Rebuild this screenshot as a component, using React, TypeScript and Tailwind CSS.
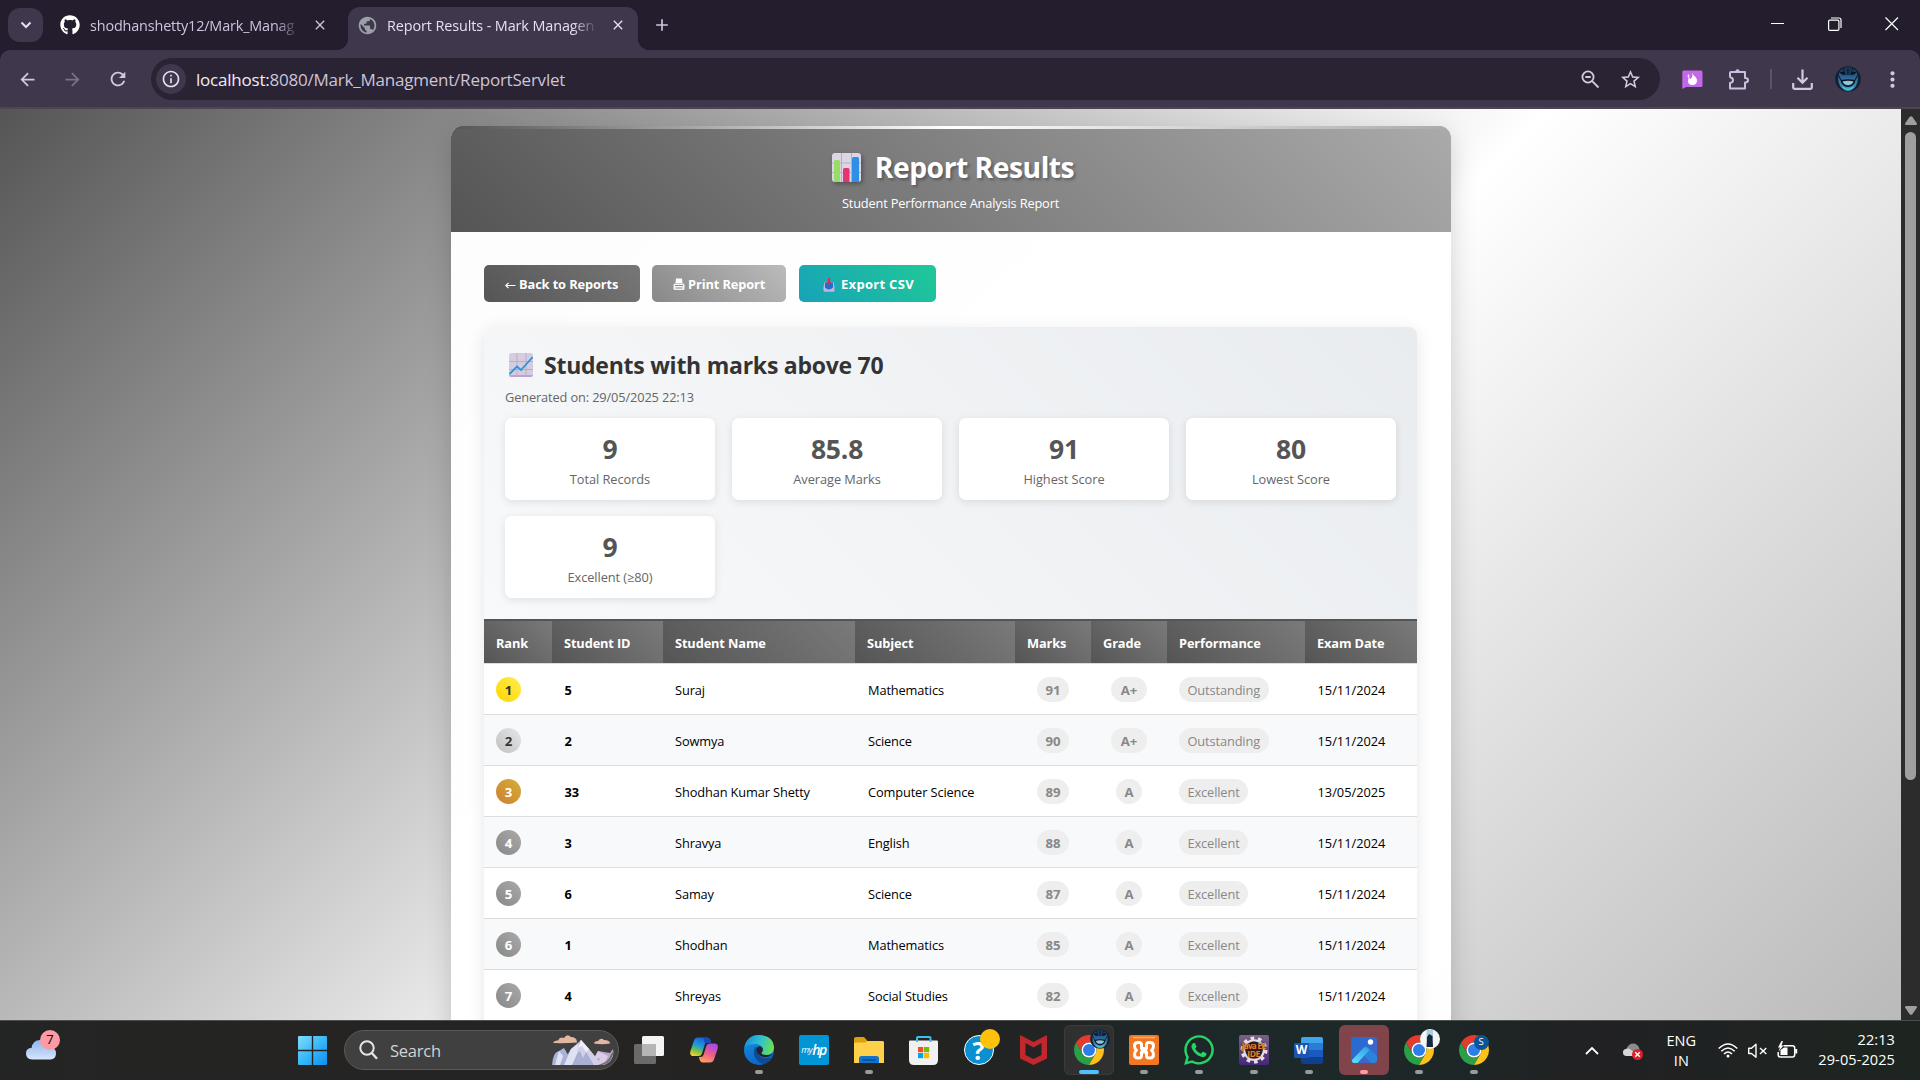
import type { ReactNode } from "react";
import { FaGithub, FaWhatsapp } from "react-icons/fa";
import {
  MdAdd,
  MdArrowBack,
  MdArrowForward,
  MdClose,
  MdInfoOutline,
  MdMoreVert,
  MdPublic,
  MdRefresh,
  MdStarBorder,
} from "react-icons/md";

/* ---------- shared drawings ---------- */

function Avatar({ size }: { size: number }) {
  return (
    <svg width={size} height={size} viewBox="0 0 26 26">
      <defs>
        <linearGradient id="face" x1="0" y1="0" x2="0" y2="1">
          <stop offset="0" stopColor="#15315a" />
          <stop offset="0.5" stopColor="#2f6c9c" />
          <stop offset="1" stopColor="#3fa6c4" />
        </linearGradient>
      </defs>
      <circle cx="13" cy="13" r="12.8" fill="#14202f" />
      <path d="M5 5Q13-3 21 5Q25 12 21 20Q13 30 5 20Q1 12 5 5" fill="url(#face)" />
      <path d="M8 2L10 7M18 2L16 7M3 9L6 14M23 9L20 14M12.2 3V9M14 3V9" stroke="#0e1a2b" strokeWidth="1.1" />
      <path d="M4.5 6Q9 4 11 8.5Q7 10 4.5 6M21.500 6Q17 4 15 8.500Q19 10 21.500 6" fill="#0a121e" />
      <path d="M5.500 14Q13 12.500 20.500 14Q19.500 20.500 13 21Q6.500 20.500 5.500 14" fill="#0c1724" />
      <path d="M7.500 15.500Q13 13.800 18.500 15.500Q17 19.300 13 19.300Q9 19.300 7.500 15.500" fill="#8cc6dc" />
      <path d="M7.500 21Q13 25 18.500 21" stroke="#5cc0dc" strokeWidth="1.200" fill="none" />
    </svg>
  );
}

function Chrome() {
  return (
    <svg width="30" height="30" viewBox="2 2 44 44">
      <path d="M4.95 13A22 22 0 0 1 43.05 13H24A11 11 0 0 0 14.47 29.500Z" fill="#e33b2e" />
      <path d="M4.950 13L14.470 29.500A11 11 0 0 0 33.530 29.500L24 46A22 22 0 0 1 4.950 13" fill="#2a9f48" />
      <path d="M24 46L33.530 29.500A11 11 0 0 0 24 13H43.050A22 22 0 0 1 24 46" fill="#fcc21b" />
      <circle cx="24" cy="24" r="11" fill="#fff" />
      <circle cx="24" cy="24" r="8.800" fill="#2f7de9" />
    </svg>
  );
}

/* ---------- browser chrome ---------- */

function TabStrip() {
  return (
    <div className="flex h-[50px] items-start bg-[#231d2e] text-[14.4px] text-[#cfc3dd]">
      <div className="mt-2 ml-2 flex h-[34px] w-[35px] items-center justify-center rounded-[12px] bg-[#3f374b]">
        <svg width="12" height="8" viewBox="0 0 12 8" fill="none" stroke="#e6dff0" strokeWidth="2">
          <path d="M1.500 1.500L6 6L10.500 1.500" />
        </svg>
      </div>
      <div className="flex h-[50px] w-[305px] items-center pl-[17px]">
        <FaGithub size={20} color="#fff" />
        <span className="ml-[10px] w-[210px] overflow-hidden pt-px tracking-[-0.15px] whitespace-nowrap [mask-image:linear-gradient(90deg,#000_88%,transparent)]">
          shodhanshetty12/Mark_Manag
        </span>
        <MdClose size={16} className="ml-[12px]" />
      </div>
      <div className="relative mt-[7px] flex h-[43px] w-[290px] items-center rounded-t-[12px] bg-[#3f374b] pl-[9px] text-[#e6dff0]">
        <div className="absolute bottom-0 -left-3 size-3 bg-[radial-gradient(circle_at_0_0,transparent_12px,#3f374b_12.5px)]" />
        <div className="absolute -right-3 bottom-0 size-3 bg-[radial-gradient(circle_at_100%_0,transparent_12px,#3f374b_12.5px)]" />
        <MdPublic size={21} color="#9aa0a6" className="mb-[7px]" />
        <span className="mb-[6px] ml-[9px] w-[211px] overflow-hidden tracking-[-0.1px] whitespace-nowrap [mask-image:linear-gradient(90deg,#000_88%,transparent)]">
          Report Results - Mark Managen
        </span>
        <MdClose size={16} className="mb-[7px] ml-[12px]" />
      </div>
      <MdAdd size={20} className="mt-[15px] ml-[14px]" />
      <div className="mt-[17px] mr-[21px] ml-auto flex gap-[43px]">
        <svg width="14" height="14" viewBox="0 0 14 14" stroke="#fff">
          <path d="M0 6.500H13" />
        </svg>
        <svg width="14" height="14" viewBox="0 0 14 14" fill="none" stroke="#fff" strokeWidth="1.200">
          <rect x="0.600" y="3.100" width="10.300" height="10.300" rx="1.200" />
          <path d="M3 1H11Q13 1 13 3V11" />
        </svg>
        <svg width="14" height="14" viewBox="0 0 14 14" stroke="#fff" strokeWidth="1.200">
          <path d="M0.500 0.500L13 13M13 0.500L0.500 13" />
        </svg>
      </div>
    </div>
  );
}

function Toolbar() {
  return (
    <div className="bg-[#231d2e]">
      <div className="flex h-[59px] items-start rounded-t-[10px] border-b-2 border-[#4d454f] bg-[#3f374b] pt-2 text-[#d3c8e2]">
        <div className="flex h-[42px] w-[151px] items-center">
          <MdArrowBack size={21} className="ml-[17px]" />
          <MdArrowForward size={21} className="ml-6 text-[#7b7189]" />
          <MdRefresh size={22} className="ml-6" />
        </div>
        <div className="flex h-[42px] w-[1509px] items-center rounded-full bg-[#2a2334]">
          <div className="ml-[5px] flex size-[30px] items-center justify-center rounded-full bg-[#3f374b]">
            <MdInfoOutline size={20} color="#e6dff0" />
          </div>
          <span className="ml-[10px] pt-0.5 text-[17px] tracking-[-0.22px] text-[#cdc4d6]">
            <span className="text-[#f1ecf6]">localhost:</span>8080/Mark_Managment/ReportServlet
          </span>
          <svg className="ml-auto" width="19" height="19" viewBox="0 0 19 19" fill="none" stroke="#d3ccd9" strokeWidth="1.800">
            <circle cx="7" cy="7" r="5.600" />
            <path d="M11.200 11.200L17.500 17.500M4.300 7H9.700" />
          </svg>
          <MdStarBorder size={23} color="#d3ccd9" className="mr-[18px] ml-[19px]" />
        </div>
        <div className="flex h-[42px] items-center">
          <svg className="ml-[22px]" width="21" height="19" viewBox="0 0 21 19">
            <path d="M1.500 0.500H19Q20.500 0.500 20.500 2V15.500Q20.500 17 19 17H4L0.300 19V2Q0.300 0.500 1.500 0.500" fill="#c468ea" />
            <path d="M10.500 2.500Q10.500 5 13.500 7Q15.500 9 15 11.500Q14 15 10.500 15Q6.500 15 6 11.500Q5.500 9 7.500 7.500Q8 9 9 9Q11 6.500 10.500 2.500" fill="#fff" />
            <path d="M6.500 4Q8 6 7 8Q4.500 7 6.500 4" fill="#fff" />
          </svg>
          <svg className="ml-[25px]" width="21" height="21" viewBox="0 0 21 21" fill="none" stroke="#cdbfe0" strokeWidth="2">
            <path d="M3 3H17V9Q20 9 20 11.200T17 13.500V19.500H2V14Q5 13.500 5 11.200T2 8V4Q2 3 3 3Z" strokeLinejoin="round" />
            <path d="M7.200 2.500Q7.500 0.200 9.500 0.200T11.800 2.500" fill="#cdbfe0" stroke="none" />
          </svg>
          <div className="ml-[21px] h-5 w-[2px] bg-[#5d5369]" />
          <svg className="ml-5" width="21" height="21" viewBox="0 0 21 21" fill="none" stroke="#d3c8e2" strokeWidth="2.200">
            <path d="M10.500 0.500V13.500M5.500 8.700L10.500 13.700L15.500 8.700M1.200 14V18.500Q1.200 19.800 2.500 19.800H18.500Q19.800 19.800 19.800 18.500V14" />
          </svg>
          <div className="ml-[22px]">
            <Avatar size={26} />
          </div>
          <MdMoreVert size={25} className="ml-[19px]" />
        </div>
      </div>
    </div>
  );
}

/* ---------- report page ---------- */

function BarChartEmoji() {
  return (
    <svg width="29" height="29" viewBox="0 0 29 29" className="drop-shadow-[2px_2px_2px_rgba(0,0,0,0.3)]">
      <rect width="29" height="29" rx="3" fill="#dcd5e4" />
      <path d="M9.500 0V29M19.500 0V29M0 10H29M0 19.500H29" stroke="#b7adc4" />
      <path d="M2 8.500Q2 7 3.500 7H6.500Q8 7 8 8.500V29H2Z" fill="#96de66" />
      <path d="M11 16.500Q11 15 12.500 15H16Q17.500 15 17.500 16.500V29H11Z" fill="#e3356f" />
      <path d="M20 5.500Q20 4 21.500 4H25.500Q27 4 27 5.500V29H20Z" fill="#2f8fe6" />
    </svg>
  );
}

function LineChartEmoji() {
  return (
    <svg width="24" height="24" viewBox="0 0 24 24">
      <rect width="24" height="24" rx="2.500" fill="#d5cce0" />
      <path d="M0 22Q0 24 2.500 24H21.500Q24 24 24 22Z" fill="#bda0d4" />
      <path d="M8 0V24M17 0V24M0 8.500H24M0 16.500H24" stroke="#b9aec8" />
      <path d="M0.500 21L8 13.500L12 17L23.700 4" stroke="#2f93d8" strokeWidth="1.800" fill="none" />
    </svg>
  );
}

function PrinterIcon() {
  return (
    <svg width="12" height="13" viewBox="0 0 12 13">
      <path d="M3 0.500H9L9.500 5H2.500Z" fill="#fff" />
      <rect x="0.500" y="5.500" width="11" height="6.500" rx="1.500" fill="#f3f3f3" />
      <path d="M2 7.500H10M2.500 10H9.500" stroke="#8e8e8e" />
    </svg>
  );
}

function InboxIcon() {
  return (
    <svg width="12" height="14" viewBox="0 0 12 14">
      <path d="M1.500 4H10.500L11.500 9V12.500Q11.500 13.800 10.200 13.800H1.800Q0.500 13.800 0.500 12.500V9Z" fill="#c3b4d8" />
      <path d="M2 4.500H10V9.500Q8 11.500 6 11.500T2 9.500Z" fill="#1c6fd0" />
      <path d="M5 0H7V4H8.500L6 7L3.500 4H5Z" fill="#d3305a" />
    </svg>
  );
}

const stats: [string, string][] = [
  ["9", "Total Records"],
  ["85.8", "Average Marks"],
  ["91", "Highest Score"],
  ["80", "Lowest Score"],
  ["9", "Excellent (≥80)"],
];

const columns = ["Rank", "Student ID", "Student Name", "Subject", "Marks", "Grade", "Performance", "Exam Date"];

const rows = [
  { id: "5", name: "Suraj", subject: "Mathematics", marks: 91, grade: "A+", perf: "Outstanding", date: "15/11/2024" },
  { id: "2", name: "Sowmya", subject: "Science", marks: 90, grade: "A+", perf: "Outstanding", date: "15/11/2024" },
  { id: "33", name: "Shodhan Kumar Shetty", subject: "Computer Science", marks: 89, grade: "A", perf: "Excellent", date: "13/05/2025" },
  { id: "3", name: "Shravya", subject: "English", marks: 88, grade: "A", perf: "Excellent", date: "15/11/2024" },
  { id: "6", name: "Samay", subject: "Science", marks: 87, grade: "A", perf: "Excellent", date: "15/11/2024" },
  { id: "1", name: "Shodhan", subject: "Mathematics", marks: 85, grade: "A", perf: "Excellent", date: "15/11/2024" },
  { id: "4", name: "Shreyas", subject: "Social Studies", marks: 82, grade: "A", perf: "Excellent", date: "15/11/2024" },
];

const rankStyles = [
  "bg-[linear-gradient(45deg,#ffd700,#ffed4e)] text-[#333]",
  "bg-[linear-gradient(45deg,#c0c0c0,#e8e8e8)] text-[#333]",
  "bg-[linear-gradient(45deg,#cd7f32,#d4af37)] text-white",
];

const gridCols = "grid grid-cols-[68px_111px_192px_160px_76px_76px_138px_112px]";

function Pill({ children, bold, wide }: { children: ReactNode; bold?: boolean; wide?: boolean }) {
  return (
    <span
      className={`flex h-[25px] items-center justify-center rounded-full bg-[#eee] px-[8.5px] pt-[3px] text-[#888] ${bold ? "text-[13.2px] font-bold" : "tracking-[-0.12px]"} ${wide ? "w-9" : ""}`}
    >
      {children}
    </span>
  );
}

function ReportTable() {
  return (
    <div className="text-[12.8px] tracking-[-0.12px] text-black">
      <div className={`${gridCols} h-[45px] border-t-2 border-b border-t-[#555] border-b-[#ddd] font-bold text-white`}>
        {columns.map((c) => (
          <div key={c} className="flex items-center bg-[linear-gradient(45deg,#555,#7a7a7a)] pt-[3px] pl-[12px]">
            {c}
          </div>
        ))}
      </div>
      {rows.map((r, i) => (
        <div
          key={r.id}
          className={`${gridCols} h-[51px] items-center border-b border-[#ddd] ${i % 2 ? "bg-[#f8f9fa]" : "bg-white"}`}
        >
          <div className="pl-3">
            <div
              className={`flex size-[25px] items-center justify-center rounded-full pt-[3px] text-[13.2px] font-bold ${rankStyles[i] ?? "bg-[linear-gradient(45deg,#888,#aaa)] text-white"}`}
            >
              {i + 1}
            </div>
          </div>
          <div className="pt-[3px] pl-[12.5px] font-bold">{r.id}</div>
          <div className="pt-[3px] pl-[12px]">{r.name}</div>
          <div className="pt-[3px] pl-[13px]">{r.subject}</div>
          <div className="flex justify-center">
            <Pill bold>{r.marks}</Pill>
          </div>
          <div className="flex justify-center">
            <Pill bold wide={r.grade === "A+"}>
              {r.grade}
            </Pill>
          </div>
          <div className="flex pl-3">
            <Pill>{r.perf}</Pill>
          </div>
          <div className="pt-[3px] pl-[12.5px] tracking-normal">{r.date}</div>
        </div>
      ))}
    </div>
  );
}

function ReportPage() {
  return (
    <div className="h-[1199px] w-[1901px] shrink-0 bg-[linear-gradient(135deg,#555_0%,#fff_50%,#aaa_100%)] pt-[17px] pl-[451px]">
      <div className="h-[1150px] w-[1000px] overflow-hidden rounded-[12px] bg-white/[0.98] shadow-[0_8px_27px_rgba(0,0,0,0.18)]">
        <div className="flex h-[106px] flex-col bg-[linear-gradient(45deg,#555,#aaa)] text-white">
          <div className="h-[3px] bg-[linear-gradient(90deg,#555,#fff,#aaa)]" />
          <div className="mt-[18px] flex h-10 items-center justify-center gap-[14px] pl-1">
            <BarChartEmoji />
            <h1 className="text-[28.3px] font-bold tracking-[-0.5px] [text-shadow:2px_2px_3px_rgba(0,0,0,0.3)]">Report Results</h1>
          </div>
          <p className="mt-[7px] pr-px text-center text-[12.8px]/[18px] tracking-[-0.16px]">Student Performance Analysis Report</p>
        </div>

        <div className="px-[33px] pt-[33px]">
          <div className="flex h-[37px] gap-3 text-[12.8px] font-bold tracking-[-0.1px] text-white">
            <div className="flex w-[156px] items-center rounded-[5px] bg-[linear-gradient(45deg,#555,#777)] pt-[2px] pl-[21px]">
              <svg width="11" height="7" viewBox="0 0 11 7" fill="none" stroke="#fff" className="mt-px mr-[3px]">
                <path d="M10.500 3.500H1M3.500 0.800L0.800 3.500L3.500 6.200" strokeWidth="1.200" />
              </svg>
              Back to Reports
            </div>
            <div className="flex w-[134px] items-center rounded-[5px] bg-[linear-gradient(45deg,#888,#bbb)] pt-[2px] pl-[21px]">
              <span className="mr-[3px]">
                <PrinterIcon />
              </span>
              Print Report
            </div>
            <div className="ml-px flex w-[137px] items-center rounded-[5px] bg-[linear-gradient(45deg,#17a2b8,#20c997)] pt-[2px] pl-6 text-[13px] tracking-[0.3px]">
              <span className="mr-[6px]">
                <InboxIcon />
              </span>
              Export CSV
            </div>
          </div>

          <div className="mt-[25px] h-[900px] w-[933px] overflow-hidden rounded-[8px] bg-white shadow-[0_4px_17px_rgba(0,0,0,0.1)]">
            <div className="h-[292px] bg-[linear-gradient(45deg,#f8f9fa,#e9ecef)] px-[21px] pt-[21px]">
              <div className="flex h-[34px] items-center gap-[11px] pl-1">
                <LineChartEmoji />
                <h2 className="text-[23px] font-bold tracking-[-0.25px] text-[#333]">Students with marks above 70</h2>
              </div>
              <p className="mt-[6px] text-[12.8px]/[18px] tracking-[-0.13px] text-[#666]">Generated on: 29/05/2025 22:13</p>
              <div className="mt-3 grid grid-cols-[repeat(4,210px)] gap-x-[17px] gap-y-4">
                {stats.map(([value, label]) => (
                  <div key={label} className="h-[82px] rounded-[7px] bg-white pt-[13px] text-center shadow-[0_2px_8px_rgba(0,0,0,0.1)]">
                    <div className="text-[26.500px]/[36px] font-bold tracking-[-0.2px] text-[#555]">{value}</div>
                    <div className="mt-[3px] text-[12.800px]/[18px] tracking-[-0.06px] text-[#666]">{label}</div>
                  </div>
                ))}
              </div>
            </div>
            <ReportTable />
          </div>
        </div>
      </div>
    </div>
  );
}

function Scrollbar() {
  return (
    <div className="flex w-[19px] flex-col items-center bg-[#2c2c2c] pt-[7px] pb-[5px]">
      <svg width="12" height="9" viewBox="0 0 12 9" fill="#9f9f9f">
        <path d="M4.700 0.800Q6-0.500 7.300 0.800L12 7.500Q12 9 11 9H1Q0 9 0 7.500Z" />
      </svg>
      <div className="mt-[7px] h-[648px] w-[11px] rounded-full bg-[#9f9f9f]" />
      <svg className="mt-auto" width="12" height="9" viewBox="0 0 12 9" fill="#9f9f9f">
        <path d="M4.700 8.200Q6 9.500 7.300 8.200L12 1.500Q12 0 11 0H1Q0 0 0 1.500Z" />
      </svg>
    </div>
  );
}

/* ---------- taskbar ---------- */

function Slot({ children, mark, tile }: { children: ReactNode; mark?: string; tile?: string }) {
  return (
    <div className="flex w-[55px] justify-center">
      <div className={`relative mt-1 flex h-[50px] w-[50px] items-center justify-center rounded-[6px] ${tile ?? ""}`}>
        {children}
        {mark && <div className={`absolute bottom-px h-1 rounded-full ${mark}`} />}
      </div>
    </div>
  );
}

const idle = "w-2 bg-[#9a9a9a]";

function WeatherWidget() {
  return (
    <div className="relative mt-[18px] ml-[26px] h-[22px] w-[30px]">
      <svg width="30" height="21" viewBox="0 0 30 21">
        <defs>
          <linearGradient id="cloud" x1="0" y1="0" x2="0" y2="1">
            <stop offset="0" stopColor="#8fb4ee" />
            <stop offset="1" stopColor="#d6e5fa" />
          </linearGradient>
        </defs>
        <path d="M6 20.500Q0 20 0 14.500T5.500 9Q7 1 14 1Q20 1 22 8Q30 7.500 30 14.500Q30 20 24.500 20.500Z" fill="url(#cloud)" />
      </svg>
      <div className="absolute -top-[9px] left-[14px] flex size-5 items-center justify-center rounded-full bg-[#ff99a4] text-[13px] text-black">
        7
      </div>
    </div>
  );
}

function SearchBox() {
  return (
    <div className="mt-[9px] ml-[17px] flex h-10 w-[275px] items-center overflow-hidden rounded-full border border-[#5a5a5a] bg-[#404040]">
      <svg className="ml-[14px]" width="19" height="20" viewBox="0 0 19 20" fill="none" stroke="#e4e4e4" strokeWidth="2">
        <circle cx="8" cy="8" r="6.700" />
        <path d="M12.800 13L18 18.700" strokeWidth="2.400" />
      </svg>
      <span className="ml-3 pt-0.5 text-[16.500px] tracking-[-0.25px] text-[#d2d2d2]">Search</span>
      <svg className="mr-[3px] ml-auto" width="63" height="32" viewBox="0 0 63 32">
        <path d="M1 9Q2 6 6 6.500Q8 2 12 4Q15-1 19 3Q25 3 25 8.500Q13 9.500 1 9M42 9.500Q42 7 46 7Q49 3 52 6Q58 6 58 9.500Q50 11 42 9.500" fill="#e2b6a0" />
        <path d="M0 31Q1 18 7 17L12 14L22 31Z" fill="#a9b3d8" />
        <path d="M38 31L46 17L58 19L61 15Q63 27 52 31Z" fill="#b7a7cf" />
        <path d="M9 31L19 15L29 6L37 15L50 31Z" fill="#aab0d2" />
        <path d="M29 6L24 20L28 17L31 24L34 18L42 31H50L37 15Z" fill="#d2cfe6" />
        <path d="M29 6L26 14L30 12L34 18L37 15Z" fill="#f0eef8" />
        <path d="M19 15L12 31H20L25 20L27 9Z" fill="#dfe2f2" />
        <path d="M7 17L3 31H8L11 22Z" fill="#dfe4f4" />
        <path d="M46 17L42 25L48 24L46 31H52L56 22Z" fill="#dccbe6" />
        <path d="M51 31Q61 28 62 16L59 20Q57 28 46 31Z" fill="#77716f" />
      </svg>
    </div>
  );
}

function Pins() {
  return (
    <div className="ml-[2px] flex">
      <Slot>
        <svg width="30" height="28" viewBox="0 0 30 28">
          <rect x="8" y="0" width="22" height="20" rx="1.500" fill="#f4f4f4" />
          <rect x="0" y="8" width="22" height="20" rx="1.500" fill="#6a6a6a" />
          <rect x="8" y="8" width="14" height="12" fill="#b5b5b5" />
        </svg>
      </Slot>
      <Slot>
        <svg width="28" height="26" viewBox="0 0 28 26">
          <defs>
            <linearGradient id="cpA" x1="0.600" y1="0" x2="0.200" y2="1">
              <stop offset="0" stopColor="#1b5fd8" />
              <stop offset="0.450" stopColor="#1e9bd8" />
              <stop offset="0.700" stopColor="#6cc04a" />
              <stop offset="1" stopColor="#ffd02e" />
            </linearGradient>
            <linearGradient id="cpB" x1="0.700" y1="0" x2="0.300" y2="1">
              <stop offset="0" stopColor="#a04be8" />
              <stop offset="0.500" stopColor="#ee5a90" />
              <stop offset="1" stopColor="#ffa15a" />
            </linearGradient>
          </defs>
          <path d="M8 0.500H17Q19.500 0.500 20.300 3L21 5.500H17.500Q15.300 5.500 14.600 8L12 16.500Q11.200 19 8.500 19H3.500Q-0.500 19 0.300 14.500L4 3.500Q5 0.500 8 0.500" fill="url(#cpA)" />
          <path d="M20 25.500H13Q10.500 25.500 9.700 23L8.800 20H10.500Q13 20 13.700 17.500L16.300 9Q17 6.500 19.500 6.500H24.500Q28.700 6.500 27.700 11.500L24 22.500Q23 25.500 20 25.500" fill="url(#cpB)" />
          <path d="M17 0.500Q19.500 0.500 20.300 3L21 5.500H17.500Q15.800 5.500 15 7L13.200 0.500Z" fill="#1a49b8" />
        </svg>
      </Slot>
      <Slot mark={idle}>
        <svg width="30" height="30" viewBox="0 0 30 30">
          <defs>
            <linearGradient id="edA" x1="0" y1="0.300" x2="1" y2="0.500">
              <stop offset="0" stopColor="#1a8fe0" />
              <stop offset="0.500" stopColor="#2ec0cf" />
              <stop offset="1" stopColor="#6be052" />
            </linearGradient>
            <linearGradient id="edB" x1="0" y1="0" x2="0.500" y2="1">
              <stop offset="0" stopColor="#1692e4" />
              <stop offset="1" stopColor="#0c63c4" />
            </linearGradient>
          </defs>
          <circle cx="15" cy="15" r="15" fill="url(#edB)" />
          <path d="M0.500 12Q3 0 15 0Q30 1 30 13.500Q29 20 22.500 20Q17.500 20 17.300 18Q19.500 16 18.500 13Q16.500 9 11 9Q4 9.500 0.500 12" fill="url(#edA)" />
          <path d="M11.500 12Q8 18 12.500 24Q18 30 27.500 23.500Q22 26 17 23Q12 20 11.500 12" fill="#0b3f86" />
          <path d="M11.500 12Q8 18 12.500 24Q15 28 20 29.200Q26 27 28.500 22.500Q19 25 14.500 20Q12 16.500 14 12.500Z" fill="#0f4a94" />
          <path d="M14.500 11.500Q11.500 14 13 17.500Q16 22.500 22.500 22Q27 21.500 29.500 18.500Q26 20.500 22.500 20Q17 20 17.300 18Q19.500 16 18.500 13Q17 10.500 14.500 11.500" fill="#232323" />
        </svg>
      </Slot>
      <Slot>
        <div className="flex size-[30px] items-center justify-center rounded-[2px] bg-[#0096d6] text-white">
          <span className="text-[9px] tracking-[-0.5px] italic">my</span>
          <span className="-mt-0.5 text-[14px] font-semibold tracking-[-1.500px] italic">hp</span>
        </div>
      </Slot>
      <Slot mark={idle}>
        <svg width="30" height="26" viewBox="0 0 30 26">
          <path d="M0 2Q0 0 2 0H9Q10 0 11 1L13.500 4H28Q30 4 30 6V12H0Z" fill="#dba10c" />
          <path d="M0 6.500Q0 5.500 1.500 5.500H11L13.500 4H28.500Q30 4 30 5.500V26H0Z" fill="#ffd04a" />
          <path d="M5 26V21.500Q5 19 7.500 19H22.500Q25 19 25 21.500V26Z" fill="#1273cc" />
          <path d="M8.500 23H21.500" stroke="#0a4486" strokeWidth="1.300" />
        </svg>
      </Slot>
      <Slot>
        <svg width="29" height="29" viewBox="0 0 29 29">
          <path d="M0 5.500Q0 4.500 1 4.500H28Q29 4.500 29 5.500V24Q29 29 24 29H5Q0 29 0 24Z" fill="#f1f1f1" />
          <path d="M8 6V2Q8 1 9 1H20.500Q21.500 1 21.500 2V6" fill="none" stroke="#34c3f4" strokeWidth="2" />
          <rect x="9" y="11" width="5.200" height="5.200" fill="#f25022" />
          <rect x="15" y="11" width="5.200" height="5.200" fill="#7fba00" />
          <rect x="9" y="17" width="5.200" height="5.200" fill="#00a4ef" />
          <rect x="15" y="17" width="5.200" height="5.200" fill="#ffb900" />
        </svg>
      </Slot>
      <Slot>
        <div className="flex size-[30px] items-center justify-center rounded-full border-[1.500px] border-white bg-[#0a8fd0] text-[25px]/[30px] font-bold text-white">
          ?
        </div>
        <div className="absolute top-1 left-[26px] size-5 rounded-full bg-[#ffc20a]" />
      </Slot>
      <Slot>
        <svg width="27" height="30" viewBox="0 0 27 30" fill="#c1272d">
          <path d="M0 0L13.500 7L27 0V23.500L13.500 30L0 23.500ZM5.500 8V20L13.500 24L21.500 20V8L13.500 12.500Z" fillRule="evenodd" />
        </svg>
      </Slot>
      <Slot mark="w-5 bg-[#4cc2ff]" tile="bg-[#303030] ring-1 ring-inset ring-[#3b3b3b]">
        <Chrome />
        <div className="absolute top-1 left-[26px] h-5">
          <Avatar size={20} />
        </div>
      </Slot>
      <Slot mark={idle}>
        <svg width="30" height="30" viewBox="0 0 30 30">
          <rect width="30" height="30" rx="2" fill="#f37623" />
          <path d="M4 2.500H26" stroke="#f9ae74" strokeWidth="1.500" />
          <path
            d="M10 7.500H9Q5.500 7.500 5.500 11Q5.500 13.800 7.500 15.200Q5.500 16.500 5.500 19.300Q5.500 23 9 23H10Q12.500 23 12.500 20.500V17H17.500V20.500Q17.500 23 20 23H21Q24.500 23 24.500 19.300Q24.500 16.500 22.500 15.200Q24.500 13.800 24.500 11Q24.500 7.500 21 7.500H20Q17.500 7.500 17.500 10V13.500H12.500V10Q12.500 7.500 10 7.500Z"
            fill="none"
            stroke="#fff"
            strokeWidth="3"
            strokeLinejoin="round"
          />
          <path d="M12 15.200H18" stroke="#fff" strokeWidth="3" />
        </svg>
      </Slot>
      <Slot mark={idle}>
        <FaWhatsapp size={34} color="#25d366" />
      </Slot>
      <Slot mark={idle}>
        <div className="relative flex size-[30px] flex-col items-center justify-center overflow-hidden rounded-[2px] bg-[linear-gradient(180deg,#7b6285,#46277a)]">
          <svg className="absolute inset-0" width="30" height="30" viewBox="0 0 30 30" fill="none">
            <circle cx="15" cy="15" r="11.500" stroke="#e4e0e4" strokeWidth="4" strokeDasharray="3.500 3.720" />
            <circle cx="15" cy="15" r="9.800" fill="#2a2230" stroke="#e4e0e4" strokeWidth="2" />
          </svg>
          <span className="relative text-[8px]/[8px] font-bold tracking-[-0.600px] whitespace-nowrap text-[#f0831e] [text-shadow:0_0_2px_#400]">
            Java EE
          </span>
          <span className="relative text-[8.500px]/[8px] font-bold tracking-[-0.500px] text-[#f0831e] [text-shadow:0_0_2px_#400]">IDE</span>
        </div>
      </Slot>
      <Slot mark={idle}>
        <div className="relative h-[27px] w-[29px]">
          <div className="ml-[7px] grid h-[27px] grid-rows-4 overflow-hidden rounded-[2px]">
            <div className="bg-[#41a5ee]" />
            <div className="bg-[#2b7cd3]" />
            <div className="bg-[#185abd]" />
            <div className="bg-[#103f91]" />
          </div>
          <div className="absolute top-[6px] left-0 flex size-[15px] items-center justify-center rounded-[1px] bg-[#1a55b4] text-[12px] font-bold text-white">
            W
          </div>
        </div>
      </Slot>
      <Slot mark="w-2 bg-[#ff99a4]" tile="bg-[#80444a]">
        <svg width="26" height="26" viewBox="0 0 26 26">
          <defs>
            <linearGradient id="phA" x1="0" y1="0" x2="1" y2="1">
              <stop offset="0" stopColor="#1d6fd4" />
              <stop offset="1" stopColor="#4a62c8" />
            </linearGradient>
            <linearGradient id="phB" x1="0" y1="1" x2="1" y2="0">
              <stop offset="0" stopColor="#5fe3fb" />
              <stop offset="1" stopColor="#2e9fe8" />
            </linearGradient>
          </defs>
          <rect width="26" height="26" rx="3" fill="url(#phA)" />
          <path d="M14 10Q15.500 9 17 10.500L26 19V23Q26 26 23 26H20L10 15Z" fill="#2b84dc" />
          <path d="M1 23L12.500 11Q14.500 9 16.500 11L18.500 13L6.500 26H3Q1 26 1 23" fill="url(#phB)" />
          <circle cx="19.500" cy="5" r="2.700" fill="#fff" />
        </svg>
      </Slot>
      <Slot mark={idle}>
        <Chrome />
        <svg className="absolute top-1 left-[26px]" width="20" height="20" viewBox="0 0 20 20">
          <circle cx="10" cy="10" r="10" fill="#f3f5f7" />
          <path d="M6.500 1H13V10H6.500Z" fill="#a9cfe0" />
          <path d="M7 8L9 5L12.500 7L13 18H6.500Z" fill="#16283a" />
        </svg>
      </Slot>
      <Slot mark={idle}>
        <Chrome />
        <div className="absolute top-[10px] left-[25px] flex size-[15px] items-center justify-center rounded-full bg-[#0b5394] text-[9.500px] text-white">
          S
        </div>
      </Slot>
    </div>
  );
}

function Tray() {
  return (
    <div className="mr-[25px] ml-auto flex items-start text-[14.500px]/[20px] text-white">
      <svg className="mt-[25px]" width="14" height="9" viewBox="0 0 14 9" fill="none" stroke="#fff" strokeWidth="1.800">
        <path d="M1 8L7 2L13 8" />
      </svg>
      <svg className="mt-[22px] ml-[24px]" width="21" height="18" viewBox="0 0 21 18">
        <path d="M3.500 13Q0 12.500 0 9.500T3.500 6Q5.500 0.500 10 0.500Q15 0.500 16.500 6L15 13Z" fill="#8c8c8c" />
        <path d="M3.500 13Q0 12.500 0 9.500T3.500 5.800Q6 5 8 7L14 11L12 13Z" fill="#d6d6d6" />
        <circle cx="14.500" cy="11.500" r="5.500" fill="#d8232e" />
        <path d="M12.200 9.200L16.800 13.800M16.800 9.200L12.200 13.800" stroke="#fff" strokeWidth="1.400" />
      </svg>
      <div className="mt-[10px] ml-[22px] w-[30px] text-center">
        ENG
        <br />
        IN
      </div>
      <svg className="mt-[22px] ml-[22px]" width="20" height="15" viewBox="0 0 20 15" fill="none" stroke="#fff" strokeWidth="1.500">
        <path d="M0.700 5.500Q10-3.500 19.300 5.500M3.300 8.300Q10 1.800 16.700 8.300M6 11Q10 7 14 11" />
        <circle cx="10" cy="13" r="1.500" fill="#fff" stroke="none" />
      </svg>
      <svg className="mt-[22px] ml-[10px]" width="19" height="16" viewBox="0 0 19 16" fill="none" stroke="#fff" strokeWidth="1.400">
        <path d="M0.700 5.200H3.500L8 1.200V14.300L3.500 10.500H0.700ZM12 5L18.300 11M18.300 5L12 11" strokeLinejoin="round" />
      </svg>
      <svg className="mt-[20px] ml-[10px]" width="21" height="18" viewBox="0 0 21 18" fill="none" stroke="#fff" strokeWidth="1.500">
        <path d="M6.500 4.700H15.500Q17.700 4.700 17.700 7V13.500Q17.700 16 15.500 16H3.500Q1.200 16 1.200 13.700V11" />
        <path d="M3.500 9L7 6.500H10.500V14H3.500Z" fill="#fff" stroke="none" />
        <path d="M4.500 0L1 6.500H3L1.500 10.500L6.500 4.500H4.500L6 0Z" fill="#fff" stroke="none" />
        <path d="M19.200 8V12.500" strokeWidth="2" />
      </svg>
      <div className="mt-[9px] ml-5 text-right tracking-[0.1px]">
        22:13
        <br />
        29-05-2025
      </div>
    </div>
  );
}

function Taskbar() {
  return (
    <div className="flex h-[60px] items-start border-t border-[#4b4e4e] bg-[linear-gradient(90deg,#232524_0%,#262422_20%,#232322_50%,#1d2828_64%,#1d2828_72%,#212123_84%,#1d2520_100%)]">
      <WeatherWidget />
      <svg className="mt-[15px] ml-[242px]" width="29" height="29" viewBox="0 0 29 29">
        <defs>
          <linearGradient id="win" x1="0" y1="0" x2="1" y2="1">
            <stop offset="0" stopColor="#84dcfb" />
            <stop offset="0.500" stopColor="#38b8f8" />
            <stop offset="1" stopColor="#0f8df2" />
          </linearGradient>
        </defs>
        <path d="M0 1Q0 0 1 0H13.800V13.800H0ZM15.200 0H28Q29 0 29 1V13.800H15.200ZM0 15.200H13.800V29H1Q0 29 0 28ZM15.200 15.200H29V28Q29 29 28 29H15.200Z" fill="url(#win)" />
      </svg>
      <SearchBox />
      <Pins />
      <Tray />
    </div>
  );
}

export default function App() {
  return (
    <div className="flex h-[1080px] w-[1920px] flex-col overflow-hidden font-['Open_Sans',sans-serif]">
      <TabStrip />
      <Toolbar />
      <div className="flex h-[911px] overflow-hidden">
        <ReportPage />
        <Scrollbar />
      </div>
      <Taskbar />
    </div>
  );
}
